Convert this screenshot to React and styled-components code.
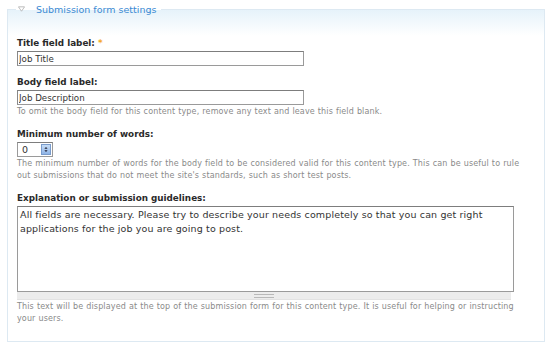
import React from 'react';
import styled, { createGlobalStyle } from 'styled-components';

const GlobalStyle = createGlobalStyle`
  body {
    margin: 0;
    background: #fff;
    font-family: "DejaVu Sans", Verdana, sans-serif;
    color: #333;
  }
`;

const SettingsForm = () => (
  <Page>
    <GlobalStyle />
    <Fieldset>
      <Legend>
        <Toggle viewBox="0 0 8 6">
          <path d="M0.5 0.5 H7.5 L4 5.5 Z" fill="none" stroke="#b5b5b5" strokeWidth="1" />
        </Toggle>
        Submission form settings
      </Legend>

      <Field>
        <Label>
          Title field label: <Required>*</Required>
        </Label>
        <TextInput defaultValue="Job Title" />
      </Field>

      <Field>
        <Label>Body field label:</Label>
        <TextInput defaultValue="Job Description" />
        <Description>
          To omit the body field for this content type, remove any text and leave this field blank.
        </Description>
      </Field>

      <Field>
        <Label>Minimum number of words:</Label>
        <NumberBox>
          <span>0</span>
          <Spinner viewBox="0 0 10 10">
            <path d="M3 4 L5 1.8 L7 4 Z" fill="#223" />
            <path d="M3 6 L5 8.2 L7 6 Z" fill="#223" />
          </Spinner>
        </NumberBox>
        <Description>
          The minimum number of words for the body field to be considered valid for this content type. This can be useful to rule
          out submissions that do not meet the site's standards, such as short test posts.
        </Description>
      </Field>

      <Field>
        <Label>Explanation or submission guidelines:</Label>
        <TextArea
          defaultValue="All fields are necessary. Please try to describe your needs completely so that you can get right applications for the job you are going to post."
        />
        <Grippie />
        <Description>
          This text will be displayed at the top of the submission form for this content type. It is useful for helping or instructing
          your users.
        </Description>
      </Field>
    </Fieldset>
  </Page>
);

export default SettingsForm;

const Page = styled.div`
  padding: 0 5px 0 7px;
  width: 550px;
  box-sizing: border-box;
`;

const Fieldset = styled.fieldset`
  margin: 0;
  min-width: 0;
  border: 1px solid #dde9f2;
  padding: 19px 9px 16px;
  background: linear-gradient(#e6f2fa 0, #ffffff 26px);
`;

const Legend = styled.legend`
  display: flex;
  align-items: center;
  gap: 11px;
  padding: 0 5px 0 2px;
  margin-left: -1px;
  height: 18px;
  font-size: 9.5px;
  color: #3a8ad3;
`;

const Toggle = styled.svg`
  width: 7px;
  height: 6px;
`;

const Field = styled.div`
  display: flex;
  flex-direction: column;
  align-items: flex-start;
  & + & {
    margin-top: 10px;
  }
`;

const Label = styled.label`
  display: block;
  font-size: 8.8px;
  font-weight: bold;
  line-height: 12px;
  color: #2a2a2a;
  margin-bottom: 2px;
`;

const Required = styled.span`
  color: #f5a81c;
`;

const TextInput = styled.input`
  box-sizing: border-box;
  width: 287px;
  height: 15px;
  margin: 0;
  padding: 0 1px;
  font-family: inherit;
  font-size: 8.7px;
  color: #333;
  border: 1px solid #9a9a9a;
  border-top-color: #7d7d7d;
  border-left-color: #888;
  outline: none;
`;

const NumberBox = styled.div`
  box-sizing: border-box;
  width: 36px;
  height: 15px;
  display: flex;
  align-items: center;
  justify-content: space-between;
  padding: 0 1px 0 4px;
  font-size: 9.5px;
  border: 1px solid #9a9a9a;
  border-top-color: #7d7d7d;
`;

const Spinner = styled.svg`
  width: 10px;
  height: 11px;
  background: linear-gradient(#c7ddf6, #8fb4e6);
  border: 1px solid #7a9ccc;
  box-sizing: border-box;
`;

const Description = styled.div`
  font-size: 8px;
  letter-spacing: 0.14px;
  word-spacing: 0.3px;
  line-height: 12px;
  color: #8a8a8a;
  margin-top: 1px;
`;

const TextArea = styled.textarea`
  box-sizing: border-box;
  width: 497px;
  height: 86px;
  margin: 0;
  padding: 1px 2px;
  resize: none;
  font-family: inherit;
  font-size: 9.5px;
  letter-spacing: 0.13px;
  line-height: 14px;
  color: #333;
  border: 1px solid #9a9a9a;
  border-top-color: #7d7d7d;
  outline: none;
`;

const Grippie = styled.div`
  box-sizing: border-box;
  width: 494px;
  height: 8px;
  background: #ececec;
  border-bottom: 1px solid #e2e2e2;
  display: flex;
  align-items: center;
  justify-content: center;
  &::after {
    content: '';
    width: 20px;
    height: 2px;
    border-top: 1px solid #b9b9b9;
    border-bottom: 1px solid #b9b9b9;
  }
`;
